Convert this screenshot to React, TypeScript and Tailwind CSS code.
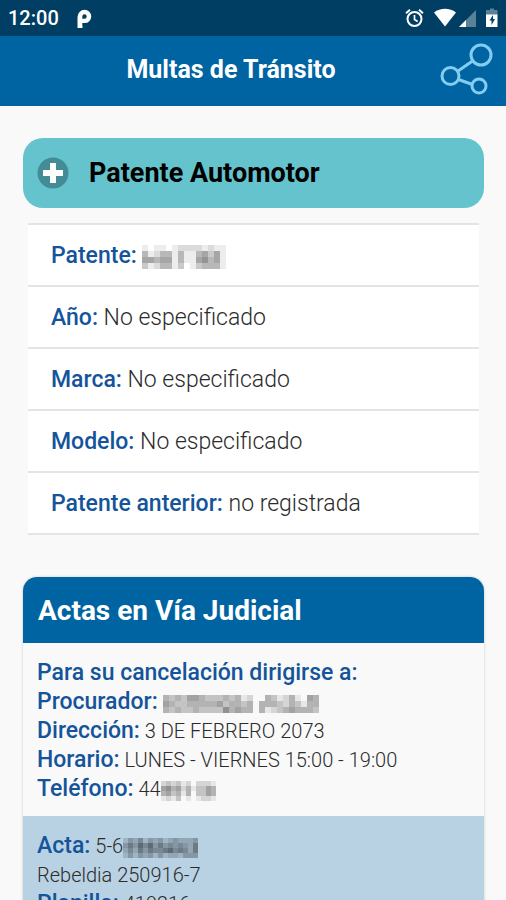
import { ReactNode } from 'react';

interface FieldProps {
  label: string;
  children: ReactNode;
}

interface MosaicProps {
  rows: string[];
  cell: number;
}

// Darkness per cell, from 0 (clear) to 9
const MOSAICS = {
  patente: ['10110122221211', '41244141145351', '55455141156451', '31244130134441'],
  procurador: ['43435543334341200431241054', '54334444453443404443243144', '43433433336454404123454443'],
  telefono: ['23231202221', '56452413354', '45341403354', '12130101221'],
  acta: ['243524342343334', '464757464545436', '353646556756536', '242434242332444'],
};

const VEHICLE = [
  { label: 'Patente', value: null },
  { label: 'Año', value: 'No especificado' },
  { label: 'Marca', value: 'No especificado' },
  { label: 'Modelo', value: 'No especificado' },
  { label: 'Patente anterior', value: 'no registrada' },
];

function Mosaic({ rows, cell }: MosaicProps) {
  const width = rows[0].length * cell;
  const height = rows.length * cell;
  return (
    <svg
      role="img"
      aria-label="Dato oculto"
      className="inline-block align-middle"
      width={width}
      height={height}
      shapeRendering="crispEdges"
    >
      {rows.map((row, y) =>
        row.split('').map((level, x) => (
          <rect
            key={`${x}-${y}`}
            x={x * cell}
            y={y * cell}
            width={cell}
            height={cell}
            fill="#000"
            fillOpacity={Number(level) * 0.07}
          />
        )),
      )}
    </svg>
  );
}

function Label({ children }: { children: ReactNode }) {
  return <span className="text-[23px] leading-none font-medium text-[#14549a]">{children}:</span>;
}

function Field({ label, children }: FieldProps) {
  return (
    <p>
      <Label>{label}</Label> {children}
    </p>
  );
}

function StatusBar() {
  return (
    <div className="flex h-9 shrink-0 items-center justify-between bg-[#003f63] pr-[7px] pl-2 text-white">
      <div className="flex items-center gap-[18px]">
        <span className="text-xl font-medium">12:00</span>
        <svg width="15" height="19" viewBox="0 0 15 19" aria-hidden="true">
          <path
            d="M.5 18.500V8A7 7.200 0 0 1 7.500.800A6.800 6.800 0 0 1 14.300 7.600A6.600 6.600 0 0 1 7.700 14H5.300V16.500A2.400 2.200 0 0 1 .5 18.500ZM5.300 9.700H7.300A2.200 2.200 0 1 0 5.300 7.500Z"
            fill="#fff"
            fillRule="evenodd"
          />
        </svg>
      </div>
      <svg width="94" height="22" viewBox="0 0 94 22" aria-hidden="true">
        {/* Alarm */}
        <g fill="none" stroke="#fff" strokeWidth="2">
          <circle cx="9.500" cy="12" r="7" />
          <path d="M9.500 8v4.500l3.200 2" strokeWidth="1.700" />
          <path d="M1 6.200L5 2.800M18 6.200L14 2.800" />
        </g>
        {/* Wifi */}
        <path d="M29 5.500C35.500.6 44.500.6 51 5.500L40 19.500Z" fill="#fff" />
        {/* Signal */}
        <path d="M71 3v17H54Z" fill="#fff" fillOpacity=".35" />
        <path d="M61 13v7h-7Z" fill="#fff" />
        {/* Battery */}
        <path d="M84 3h1V1.500h4V3h3.500v5H81V3Z" fill="#fff" fillOpacity=".35" />
        <path d="M81 7.500h11.500V20H81Z" fill="#fff" />
        <path d="M88 8l-3.500 5.500h2V18l3.500-6H88Z" fill="#003f63" />
      </svg>
    </div>
  );
}

function ShareIcon() {
  return (
    <svg width="54" height="54" viewBox="0 0 54 54" fill="none" stroke="#83cdf0" strokeWidth="3" aria-hidden="true">
      <circle cx="41" cy="12" r="10" />
      <circle cx="10.500" cy="33" r="8.500" />
      <circle cx="39" cy="43" r="7" />
      <path d="M18 28L32.500 18M18.500 36.500L32.500 41.500" />
    </svg>
  );
}

export default function App() {
  return (
    <div className="flex h-screen flex-col bg-[#f9f9f9] font-['Roboto',sans-serif] text-[#2b2b2b]">
      <StatusBar />
      <header className="flex h-[70px] shrink-0 items-center bg-[#0064a3] pr-3 pb-[2px] pl-[22px]">
        <h1 className="flex-1 text-center text-[25px] font-bold text-white">Multas de Tránsito</h1>
        <button type="button" aria-label="Compartir">
          <ShareIcon />
        </button>
      </header>

      <main className="min-h-0 flex-1 overflow-y-auto pt-8 pr-[22px] pl-[23px] [scrollbar-width:none]">
        <button
          type="button"
          className="flex h-[70px] w-full items-center gap-5 rounded-[20px] bg-[#64c3cc] px-[14px] text-left"
        >
          <svg width="32" height="32" viewBox="0 0 32 32" aria-hidden="true">
            <circle cx="16" cy="16" r="15.500" fill="#438c95" />
            <path d="M13 6h6v7h7v6h-7v7h-6v-7H6v-6h7Z" fill="#fff" />
          </svg>
          <span className="text-[27px] font-bold text-black">Patente Automotor</span>
        </button>

        <ul className="mx-[5px] mt-[15px] border-t-2 border-[#e4e4e4] bg-white text-[23px] font-light">
          {VEHICLE.map((item) => (
            <li key={item.label} className="flex h-[62px] items-center border-b-2 border-[#e4e4e4] px-[23px] pt-[2px]">
              <Field label={item.label}>{item.value ?? <Mosaic rows={MOSAICS.patente} cell={6} />}</Field>
            </li>
          ))}
        </ul>

        <section className="mt-[42px] rounded-t-[14px] shadow-[0_0_3px_rgba(0,0,0,0.2)]">
          <h2 className="flex h-[66px] items-center rounded-t-[14px] bg-[#0064a3] px-[15px] pt-[2px] text-[28px] font-bold text-white">
            Actas en Vía Judicial
          </h2>
          <div className="px-[14px] pt-4 pb-3 text-xl leading-[29px] font-light">
            <p>
              <Label>Para su cancelación dirigirse a</Label>
            </p>
            <Field label="Procurador">
              <Mosaic rows={MOSAICS.procurador} cell={6} />
            </Field>
            <Field label="Dirección">3 DE FEBRERO 2073</Field>
            <Field label="Horario">LUNES - VIERNES 15:00 - 19:00</Field>
            <Field label="Teléfono">
              44
              <Mosaic rows={MOSAICS.telefono} cell={5} />
            </Field>
          </div>
          <div className="bg-[#b9d2e3] px-[14px] pt-4 pb-3 text-xl leading-[29px] font-light">
            <Field label="Acta">
              5-6
              <Mosaic rows={MOSAICS.acta} cell={5} />
            </Field>
            <p>Rebeldia 250916-7</p>
            <Field label="Planilla">419216</Field>
          </div>
        </section>
      </main>
    </div>
  );
}
